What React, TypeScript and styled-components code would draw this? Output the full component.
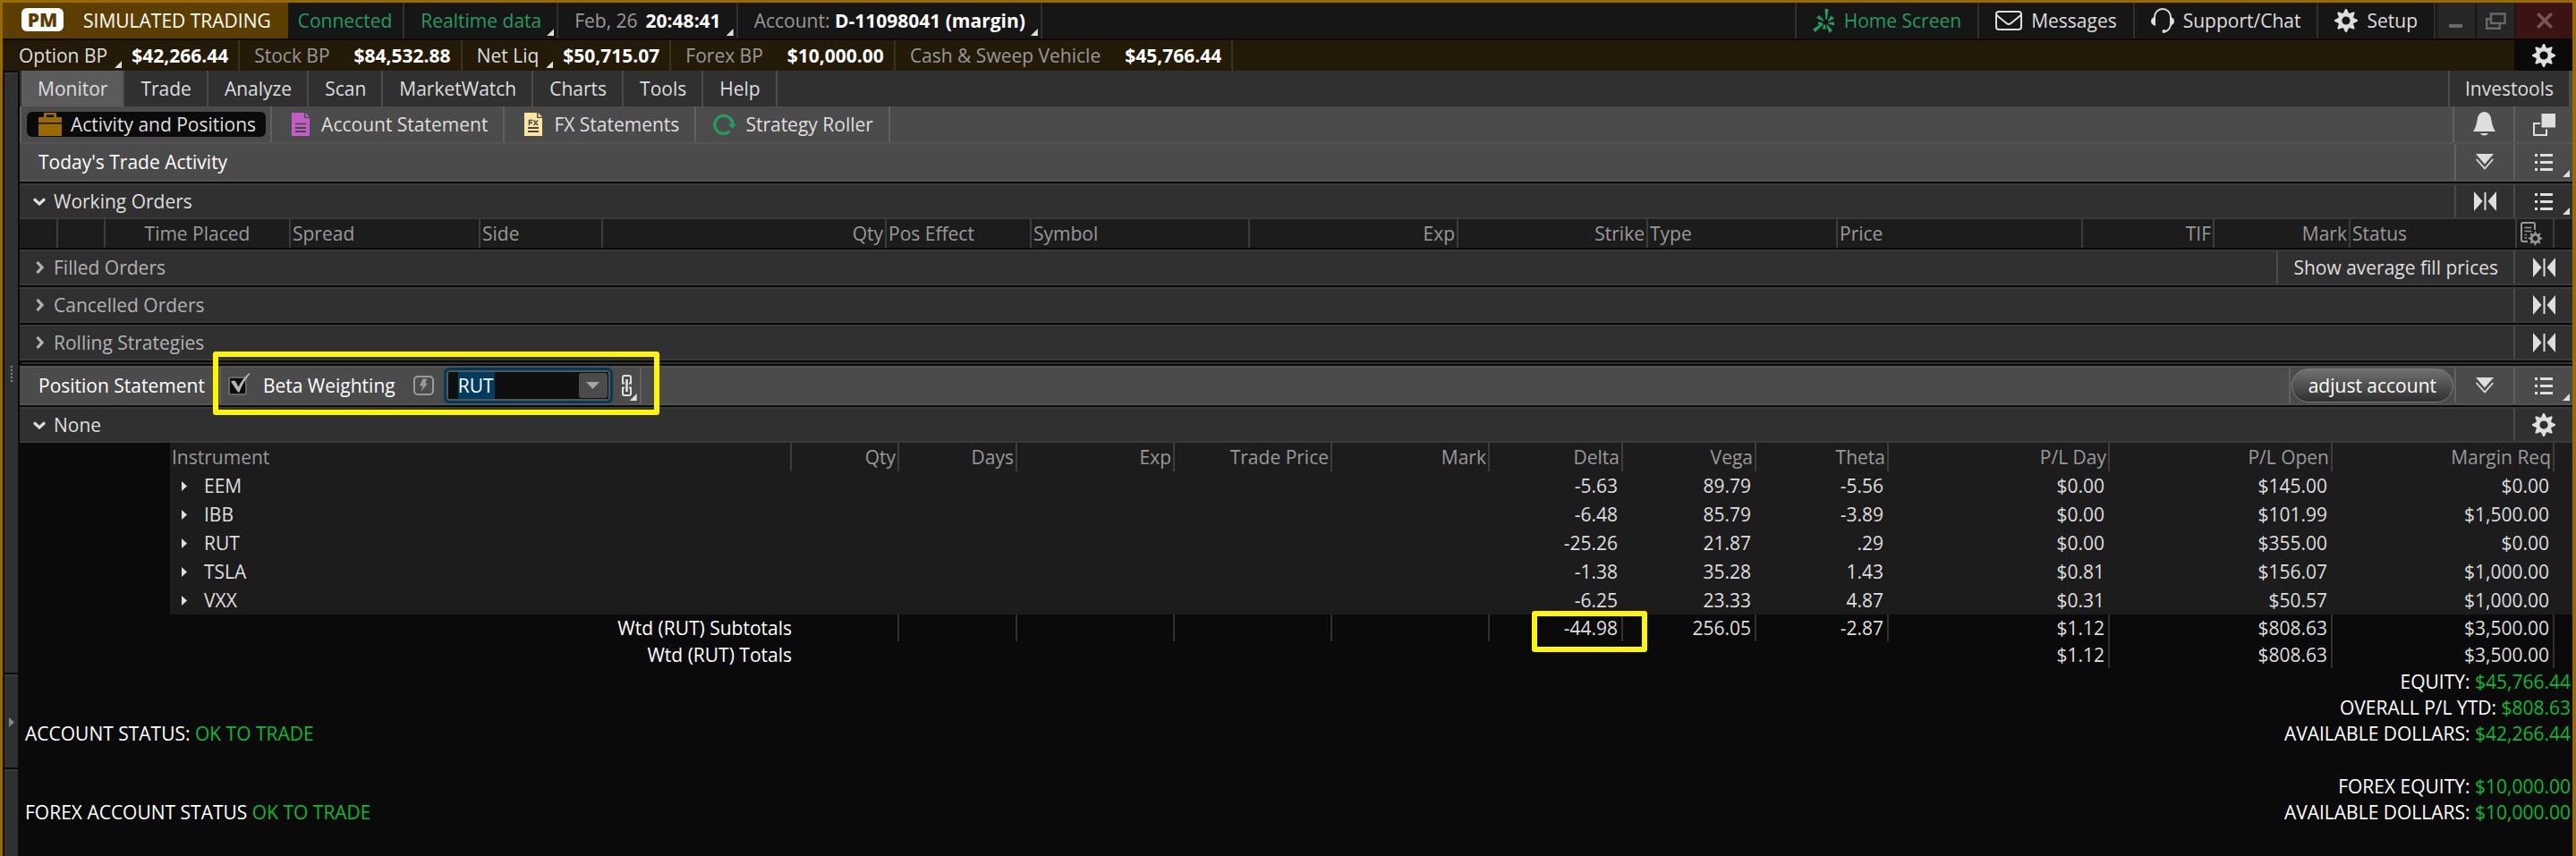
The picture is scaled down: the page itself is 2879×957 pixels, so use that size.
import React, { ReactNode } from "react";
import styled, { createGlobalStyle, css } from "styled-components";

const c = {
  gold: "#986a00",
  black: "#0a0a0a",
  bar: "#161616",
  dark: "#303030",
  darkLine: "#393939",
  darkSep: "#4b4b4b",
  mid: "#4b4b4b",
  midLine: "#535353",
  midSep: "#606060",
  table: "#1c1c1c",
  text: "#dedede",
  muted: "#999999",
  teal: "#259b5f",
  green: "#06bb30",
  highlight: "#fff600",
};

const GlobalStyle = createGlobalStyle`
  * { box-sizing: border-box; }
  body {
    margin: 0;
    background: ${c.black};
    color: ${c.text};
    font: 400 21px/28px "Open Sans", "Noto Sans", sans-serif;
  }
  button, input { font: inherit; color: inherit; }
  button { background: none; border: 0; padding: 0; cursor: pointer; }
  svg { display: block; flex: none; }
`;

const Frame = styled.div`
  display: flex;
  flex-direction: column;
  min-height: 100vh;
  border: solid ${c.gold};
  border-width: 3px 4px 0 3px;
  white-space: nowrap;
`;

/* ---------- title bar ---------- */

const TitleBar = styled.header`
  display: flex;
  height: 40px;
  background: ${c.bar};
`;

const ModeTag = styled.div`
  display: flex;
  align-items: center;
  gap: 22px;
  padding: 0 19px 0 21px;
  background: #5c3f00;
  color: #fff;
`;

const Badge = styled.span`
  width: 47px;
  height: 26px;
  margin-bottom: 3px;
  border-radius: 6px;
  background: #fff;
  color: #5c3f00;
  font-weight: 800;
  line-height: 26px;
  text-align: center;
`;

const TitleItem = styled.div<{ $tone?: string; $tight?: boolean }>`
  position: relative;
  display: flex;
  align-items: center;
  gap: 9px;
  padding: 0 17px 0 18px;
  ${(p) => p.$tight && "padding: 0 12px 0 11px;"}
  border-right: 2px solid #2f2f2f;
  color: ${(p) => p.$tone ?? c.muted};
`;

const Strong = styled.strong`
  color: #fff;
  font-weight: 700;
`;

const Corner = styled.i<{ $outside?: boolean }>`
  position: absolute;
  right: ${(p) => (p.$outside ? "-16px" : "3px")};
  bottom: 3px;
  width: 8px;
  height: 8px;
  background: ${c.text};
  clip-path: polygon(100% 0, 100% 100%, 0 100%);
`;

const Spacer = styled.div`
  flex: 1;
`;

const TitleAction = styled.button<{ $tone?: string }>`
  display: flex;
  align-items: center;
  gap: 10px;
  padding: 0 18px;
  border-left: 2px solid #2f2f2f;
  color: ${(p) => p.$tone ?? c.text};
`;

const WindowButtons = styled.div`
  display: flex;
  gap: 2px;
  padding-left: 2px;
  border-left: 2px solid #2f2f2f;
`;

const WindowButton = styled.button<{ $close?: boolean }>`
  display: grid;
  place-items: center;
  width: ${(p) => (p.$close ? 63 : 42)}px;
  background: ${(p) => (p.$close ? "#3c1313" : "#262626")};
  color: ${(p) => (p.$close ? "#7b5555" : "#696969")};
`;

/* ---------- balances ---------- */

const Balances = styled.div`
  display: flex;
  height: 34px;
  margin-top: 2px;
  padding-left: 2px;
  background: #231a08;
`;

const Balance = styled.div`
  display: flex;
  align-items: center;
  gap: 27px;
  padding: 0 11px 0 16px;
  border-right: 2px solid #3b3220;
  &:last-of-type { border-right: 0; }
`;

const BalanceLabel = styled.span<{ $menu?: boolean }>`
  position: relative;
  height: 34px;
  line-height: 34px;
  color: ${(p) => (p.$menu ? c.text : c.muted)};
`;

const BalanceGear = styled.button`
  display: grid;
  place-items: center;
  width: 65px;
  background: ${c.black};
`;

/* ---------- body ---------- */

const Body = styled.div`
  display: flex;
  flex: 1;
`;

const SideRail = styled.aside`
  display: flex;
  flex-direction: column;
  gap: 2px;
  width: 15px;
  margin: 2px 2px 0;
`;

const RailPart = styled.button<{ $size?: number }>`
  display: grid;
  place-items: center;
  flex: ${(p) => (p.$size ? `0 0 ${p.$size}px` : 1)};
  background: ${c.dark};
  border-top: 2px solid ${c.darkLine};
`;

const Main = styled.main`
  flex: 1;
  min-width: 0;
`;

const Tabs = styled.nav`
  display: flex;
  height: 40px;
  padding-left: 2px;
  background: ${c.dark};
`;

const Tab = styled.button<{ $active?: boolean }>`
  padding: 0 17px 0 18px;
  border-right: 2px solid ${c.darkSep};
  background: ${(p) => (p.$active ? "#5b5b5b" : "transparent")};
`;

const SideLink = styled.a`
  display: flex;
  align-items: center;
  padding: 0 17px;
  border: solid ${c.darkSep};
  border-width: 0 4px 0 2px;
  color: ${c.text};
  text-decoration: none;
`;

const SubTabs = styled.nav`
  display: flex;
  height: 40px;
  background: ${c.mid};
  border-left: 2px solid ${c.midSep};
`;

const SubTab = styled.button<{ $active?: boolean }>`
  display: flex;
  align-items: center;
  padding: ${(p) => (p.$active ? "0 5px 0 6px" : "0 17px 0 19px")};
  border-right: 2px solid ${c.midSep};
`;

const SubTabFace = styled.span<{ $active?: boolean }>`
  display: flex;
  align-items: center;
  gap: 10px;
  height: 28px;
  ${(p) => p.$active && css`
    padding: 0 11px 0 13px;
    border-radius: 6px;
    background: ${c.black};
  `}
`;

const IconSlot = styled.span`
  display: grid;
  place-items: center;
  width: 26px;
`;

/* ---------- section bars ---------- */

const Bar = styled.div<{ $light?: boolean; $first?: boolean }>`
  display: flex;
  height: ${(p) => (p.$light ? 44 : 40)}px;
  margin-top: ${(p) => (p.$first ? 0 : 2)}px;
  border: solid ${(p) => (p.$light ? c.midLine : c.darkLine)};
  border-width: 2px 0;
  background: ${(p) => (p.$light ? c.mid : c.dark)};
  --sep: ${(p) => (p.$light ? c.midSep : c.darkSep)};
`;

const BarTitle = styled.h2`
  display: flex;
  align-items: center;
  margin: 0;
  padding: 0 16px 0 21px;
  color: #fff;
  font: inherit;
`;

const Toggle = styled.button<{ $open?: boolean }>`
  display: flex;
  align-items: center;
  gap: 8px;
  padding-left: 14px;
  color: ${(p) => (p.$open ? c.text : "#b2b2b2")};
`;

const ChevronSlot = styled.span`
  display: grid;
  place-items: center;
  width: 16px;
`;

const BarButton = styled.button<{ $wide?: boolean }>`
  position: relative;
  display: grid;
  place-items: center;
  width: ${(p) => (p.$wide ? 68 : 66)}px;
  border-left: 2px solid var(--sep, ${c.midSep});
`;

const BarTextButton = styled.button`
  padding: 0 17px;
  border-left: 2px solid var(--sep);
`;

const Divider = styled.hr`
  height: 2px;
  margin: 2px 0 0 2px;
  border: 0;
  background: ${c.dark};
`;

/* ---------- beta weighting ---------- */

const BetaGroup = styled.div`
  position: relative;
  display: flex;
  align-items: center;
  padding: 0 0 0 8px;
  border: solid var(--sep);
  border-width: 0 2px;
  color: #fff;
`;

const Highlight = styled.span<{ $inset: string }>`
  position: absolute;
  inset: ${(p) => p.$inset};
  z-index: 1;
  border: 6px solid ${c.highlight};
  border-radius: 3px;
  pointer-events: none;
`;

const CheckLabel = styled.label`
  position: relative;
  display: flex;
  align-items: center;
  gap: 18px;
  svg { position: absolute; left: 3px; top: 0; pointer-events: none; display: none; }
  input:checked + svg { display: block; }
`;

const CheckBox = styled.input`
  appearance: none;
  width: 21px;
  height: 21px;
  margin: 0;
  border: 2px solid #666;
  border-radius: 3px;
  background: ${c.black};
`;

const Flash = styled.button`
  margin: 0 11px 0 20px;
`;

const Combo = styled.div`
  display: flex;
  align-items: center;
  width: 189px;
  height: 40px;
  padding: 0 3px 0 13px;
  border: 3px solid #003a5c;
  border-radius: 6px;
  background: #0f0f0f;
  box-shadow: inset 0 0 0 2px #555;
`;

const ComboInput = styled.input`
  flex: 1;
  min-width: 0;
  height: 30px;
  padding: 0;
  border: 0;
  outline: 0;
  color: #fff;
  background: linear-gradient(#003b60, #003b60) 0 0 / 41px 100% no-repeat;
`;

const ComboArrow = styled.button`
  display: grid;
  place-items: center;
  width: 32px;
  height: 28px;
  border-radius: 3px;
  background: #4b4b4b;
`;

const LinkButton = styled.button`
  position: relative;
  display: flex;
  align-items: center;
  align-self: stretch;
  width: 20px;
  margin-left: 10px;
`;

const PillCell = styled.div`
  display: flex;
  align-items: center;
  padding: 0 1px;
  border-left: 2px solid var(--sep);
`;

const Pill = styled.button`
  height: 38px;
  padding: 0 18px;
  border: 1px solid #7b7b7b;
  border-radius: 19px;
  background: linear-gradient(#707070, #303030);
  color: #fff;
`;

/* ---------- tables ---------- */

const Grid = styled.table`
  width: 100%;
  table-layout: fixed;
  border-collapse: separate;
  border-spacing: 0;
  th, td { padding: 0; overflow: visible; }
`;

type Align = "left" | "right" | "center";

const Head = styled.th<{ $align?: Align; $line?: boolean }>`
  height: 32px;
  && { padding: 0 2px; }
  border-right: 2px solid ${(p) => (p.$line === false ? c.table : "#3c3c3c")};
  background: ${c.table};
  color: ${c.muted};
  font-weight: 400;
  text-align: ${(p) => p.$align ?? "right"};
  svg { margin-left: 2px; }
`;

const Cell = styled.td<{ $total?: boolean; $line?: boolean }>`
  position: relative;
  height: ${(p) => (p.$total ? 30 : 32)}px;
  && { padding-right: 4px; }
  border-right: 2px solid ${(p) => (p.$line ? "#303030" : "transparent")};
  background: ${(p) => (p.$total ? c.black : c.table)};
  text-align: right;
`;

const Gutter = styled.td`
  background: ${c.black};
`;

const SymbolCell = styled.td`
  background: ${c.table};
`;

const SymbolButton = styled.button`
  display: flex;
  align-items: center;
  gap: 19px;
  padding-left: 13px;
`;

const TotalLabel = styled.th`
  height: 30px;
  color: #fff;
  font-weight: 400;
  text-align: right;
`;

/* ---------- footer ---------- */

const Summary = styled.footer`
  display: grid;
  grid-template-columns: 1fr auto;
  grid-template-rows: repeat(3, 29px) 30px repeat(2, 29px);
  padding: 1px 2px 0 6px;
  color: #fff;
  line-height: 29px;
`;

const SummaryLine = styled.div<{ $row: number; $end?: boolean }>`
  grid-row: ${(p) => p.$row};
  grid-column: ${(p) => (p.$end ? 2 : 1)};
  text-align: ${(p) => (p.$end ? "right" : "left")};
`;

const Good = styled.span`
  color: ${c.green};
`;

/* ---------- icons ---------- */

const Gear = ({ size = 26, color = c.text }: { size?: number; color?: string }) => (
  <svg width={size} height={size} viewBox="-13 -13 26 26">
    <circle r="6.8" fill="none" stroke={color} strokeWidth="4.4" />
    {[0, 45, 90, 135, 180, 225, 270, 315].map((a) => (
      <path key={a} d="M-3.4-7.6L-.8-13H.8L3.4-7.6Z" fill={color} transform={`rotate(${a})`} />
    ))}
  </svg>
);

const Burst = () => (
  <svg width="25" height="27" viewBox="0 0 25 27" fill={c.teal}>
    <path d="M13.5 0h4l-1.7 12h-1.4ZM20.5 7.5l3.5 3-6.3 3.8-.8-1ZM24 14.5v4l-6.500-1.700v-1.200ZM22 24l-3.600 3-3.400-9 1.200-.6ZM10.800 22.500h4l-1-5h-1.600ZM0 22.500l2.600 3.500 9-8.600-1-1.400ZM6 14.200v3.800l5-1.600v-.8ZM4 10l3-3 5.500 5.800-.9.900Z" />
  </svg>
);

const Envelope = () => (
  <svg width="30" height="22" viewBox="0 0 30 22" fill="none" stroke={c.text} strokeWidth="2">
    <rect x="1" y="1" width="28" height="20" rx="3" />
    <path d="M1.500 5L12.500 14Q15 16 17.500 14L28.500 5" />
  </svg>
);

const Headset = () => (
  <svg width="26" height="28" viewBox="0 0 26 28" fill="none" stroke={c.text} strokeWidth="2">
    <path d="M4 18V10A9 9 0 0 1 22 10V18Q21.500 25 15 26.500" />
    <path d="M5 9.500V20Q0 18.500 0 14.800T5 9.500ZM21 9.500V20Q26 18.500 26 14.800T21 9.500Z" fill={c.text} stroke="none" />
    <circle cx="14.500" cy="26" r="2" fill={c.text} stroke="none" />
  </svg>
);

const Minimise = () => (
  <svg width="16" height="18" viewBox="0 0 16 18"><path d="M0 13h15v4H0z" fill="currentColor" /></svg>
);

const Restore = () => (
  <svg width="23" height="19" viewBox="0 0 23 19" fill="none" stroke="currentColor" strokeWidth="2.400">
    <rect x="6" y="1.500" width="15.500" height="10.500" />
    <path d="M5 7.200H1.200V17.800H15.800V13" />
  </svg>
);

const Close = () => (
  <svg width="18" height="18" viewBox="0 0 18 18" fill="none" stroke="currentColor" strokeWidth="3.600">
    <path d="M1.200 1.200L16.800 16.800M16.800 1.200L1.200 16.800" />
  </svg>
);

const Briefcase = () => (
  <svg width="26" height="26" viewBox="0 0 26 26" fill={c.gold}>
    <path d="M6 5V0h14v5h-3V2.500H9V5ZM0 5h26v6H0ZM0 12.500h26V26H0Z" />
  </svg>
);

const Doc = ({ color, fx }: { color: string; fx?: boolean }) => (
  <svg width="20" height="26" viewBox="0 0 20 26">
    <path d="M0 0H14V6H20V26H0Z" fill={color} />
    <path d="M15.500 0L20 4.700H15.500Z" fill={color} />
    <g stroke="#474747" strokeWidth="1.500" fill="none">
      {!fx && <path d="M4 12.500H16" />}
      <path d="M4 17H16M4 21H16" strokeWidth="2" />
      {fx && <path d="M5.500 14V8.500H9.500M5.500 11.200H9M10.500 8.500L15 14M15 8.500L10.500 14" />}
    </g>
  </svg>
);

const Roller = () => (
  <svg width="26" height="24" viewBox="0 0 26 24">
    <path d="M18.500 19.800A10 10 0 1 1 21.800 13" fill="none" stroke={c.teal} strokeWidth="3.400" />
    <path d="M17 11.500H26L21.500 17Z" fill={c.teal} />
  </svg>
);

const Bell = () => (
  <svg width="25" height="32" viewBox="0 0 25 32" fill={c.text}>
    <path d="M0 24Q3 20 4.500 12Q5.500 2 12.500 2T20.500 12Q22 20 25 24ZM8 26h9q-1.500 2.500-4.500 2.500T8 26Z" />
  </svg>
);

const PopOut = () => (
  <svg width="25" height="25" viewBox="0 0 25 25">
    <path d="M8 11H1V24H15V17.500" fill="none" stroke={c.text} strokeWidth="2" />
    <rect x="9.500" width="15.500" height="15.500" fill={c.text} />
  </svg>
);

const DoubleDown = () => (
  <svg width="20" height="18" viewBox="0 0 20 18">
    <path d="M0 0H20L10 11.500Z" fill={c.text} />
    <path d="M.7 6L10 16.500L19.300 6" fill="none" stroke={c.text} strokeWidth="1.800" />
  </svg>
);

const List = () => (
  <svg width="20" height="19" viewBox="0 0 20 19" fill={c.text}>
    <path d="M0 0h3v3H0zM6 0h14v3H6zM0 8h3v3H0zM6 8h14v3H6zM0 16h3v3H0zM6 16h14v3H6z" />
  </svg>
);

const Collapse = () => (
  <svg width="25" height="22" viewBox="0 0 25 22" fill={c.text}>
    <path d="M0 0L9.500 11L0 22ZM11.500 1h2v20h-2zM25 0L15.500 11L25 22Z" />
  </svg>
);

const DocGear = () => (
  <svg width="25" height="27" viewBox="0 0 25 27" fill="none" stroke={c.muted} strokeWidth="2">
    <path d="M8 22H3Q1 22 1 20V3Q1 1 3 1H14Q16 1 16 3V9" />
    <path d="M4.500 6.500H12.500M4.500 10.500H12.500M4.500 14.500H7M4.500 18H7" strokeWidth="1.600" />
    <g transform="translate(16.500 18.500)">
      <circle r="4.200" strokeWidth="2.600" />
      {[0, 45, 90, 135, 180, 225, 270, 315].map((a) => (
        <path key={a} d="M-1.800-5L0-8.500L1.800-5Z" fill={c.muted} stroke="none" transform={`rotate(${a})`} />
      ))}
    </g>
  </svg>
);

const ChevronDown = () => (
  <svg width="14" height="9" viewBox="0 0 14 9" fill="none" stroke="currentColor" strokeWidth="3.200">
    <path d="M1 1.500L7 7L13 1.500" />
  </svg>
);

const ChevronRight = () => (
  <svg width="9" height="14" viewBox="0 0 9 14" fill="none" stroke="currentColor" strokeWidth="3.200">
    <path d="M1.500 1L7 7L1.500 13" />
  </svg>
);

const Arrow = ({ color = c.text }: { color?: string }) => (
  <svg width="6" height="11" viewBox="0 0 6 11"><path d="M0 0L6 5.500L0 11Z" fill={color} /></svg>
);

const Grip = () => (
  <svg width="2" height="18" viewBox="0 0 2 18" fill="#858585">
    <path d="M0 0h2v2H0zM0 4h2v2H0zM0 8h2v2H0zM0 12h2v2H0zM0 16h2v2H0z" />
  </svg>
);

const Tick = () => (
  <svg width="22" height="24" viewBox="0 0 22 24">
    <path d="M0 9.500Q3 8 5 9L8.500 15.500Q13 6 20.500 0L21.500 1Q14 9 9.500 21.500H8Z" fill="#b4b4b4" />
  </svg>
);

const Bolt = () => (
  <svg width="23" height="22" viewBox="0 0 23 22">
    <rect x="1" y="1" width="21" height="20" rx="4" fill="none" stroke="#9a9a9a" strokeWidth="2" />
    <path d="M10.500 3.500H15.500L13 8.500H16L8.500 18L10.500 11.500H7Z" fill="#9a9a9a" />
  </svg>
);

const Chain = () => (
  <svg width="11" height="24" viewBox="0 0 11 24" fill="none" stroke={c.text} strokeWidth="2">
    <path d="M3 9.500H1V3Q1 1 3 1H8Q10 1 10 3V9.500H8M3 14.500H1V21Q1 23 3 23H8Q10 23 10 21V14.500H8" />
    <path d="M5.500 5V19" strokeWidth="2.600" />
  </svg>
);

const Caret = () => (
  <svg width="15" height="8" viewBox="0 0 15 8"><path d="M0 0H15L7.500 8Z" fill="#a5a5a5" /></svg>
);

/* ---------- data ---------- */

const balances = [
  { label: "Option BP", value: "$42,266.44", menu: true },
  { label: "Stock BP", value: "$84,532.88" },
  { label: "Net Liq", value: "$50,715.07", menu: true },
  { label: "Forex BP", value: "$10,000.00" },
  { label: "Cash & Sweep Vehicle", value: "$45,766.44" },
];

const tabs = ["Monitor", "Trade", "Analyze", "Scan", "MarketWatch", "Charts", "Tools", "Help"];

const orderColumns: { w: number; label?: string; align?: Align }[] = [
  { w: 43 }, { w: 53 },
  { w: 207, label: "Time Placed", align: "center" },
  { w: 212, label: "Spread", align: "left" },
  { w: 137, label: "Side", align: "left" },
  { w: 317, label: "Qty" },
  { w: 162, label: "Pos Effect", align: "left" },
  { w: 244, label: "Symbol", align: "left" },
  { w: 233, label: "Exp" },
  { w: 212, label: "Strike" },
  { w: 212, label: "Type", align: "left" },
  { w: 274, label: "Price", align: "left" },
  { w: 147, label: "TIF" },
  { w: 152, label: "Mark" },
  { w: 186, label: "Status", align: "left" },
];

const positionColumns = ["Qty", "Days", "Exp", "Trade Price", "Mark", "Delta", "Vega", "Theta", "P/L Day", "P/L Open", "Margin Req"];
const positionWidths = [168, 695, 120, 132, 176, 176, 176, 149, 149, 148, 247, 249, 248, 20];

const positions = [
  ["EEM", "-5.63", "89.79", "-5.56", "$0.00", "$145.00", "$0.00"],
  ["IBB", "-6.48", "85.79", "-3.89", "$0.00", "$101.99", "$1,500.00"],
  ["RUT", "-25.26", "21.87", ".29", "$0.00", "$355.00", "$0.00"],
  ["TSLA", "-1.38", "35.28", "1.43", "$0.81", "$156.07", "$1,000.00"],
  ["VXX", "-6.25", "23.33", "4.87", "$0.31", "$50.57", "$1,000.00"],
];

/* ---------- composed parts ---------- */

const Section = ({ title, open, children }: { title: string; open?: boolean; children: ReactNode }) => (
  <Bar>
    <Toggle $open={open} aria-expanded={!!open}>
      <ChevronSlot>{open ? <ChevronDown /> : <ChevronRight />}</ChevronSlot>
      {title}
    </Toggle>
    <Spacer />
    {children}
  </Bar>
);

const ListButton = () => (
  <BarButton aria-label="Menu"><List /><Corner /></BarButton>
);

const CollapseButton = () => (
  <BarButton aria-label="Collapse"><Collapse /></BarButton>
);

const SubTabItem = ({ icon, label, active }: { icon: ReactNode; label: string; active?: boolean }) => (
  <SubTab $active={active}>
    <SubTabFace $active={active}><IconSlot>{icon}</IconSlot>{label}</SubTabFace>
  </SubTab>
);

const OrdersTable = () => (
  <Grid>
    <colgroup>
      {orderColumns.map((col, i) => <col key={i} width={col.w} />)}
      <col width={42} />
      <col width={20} />
    </colgroup>
    <thead>
      <tr>
        {orderColumns.map((col, i) => <Head key={i} $align={col.align}>{col.label}</Head>)}
        <Head $align="left"><DocGear /></Head>
        <Head $line={false} />
      </tr>
    </thead>
  </Grid>
);

const PositionsTable = () => (
  <Grid>
    <colgroup>{positionWidths.map((w, i) => <col key={i} width={w} />)}</colgroup>
    <thead>
      <tr>
        <Gutter />
        <Head $align="left">Instrument</Head>
        {positionColumns.map((name) => <Head key={name}>{name}</Head>)}
        <Head $line={false} />
      </tr>
    </thead>
    <tbody>
      {positions.map(([symbol, ...values]) => (
        <tr key={symbol}>
          <Gutter />
          <SymbolCell><SymbolButton><Arrow />{symbol}</SymbolButton></SymbolCell>
          <Cell colSpan={5} />
          {values.map((v, i) => <Cell key={i}>{v}</Cell>)}
          <Cell />
        </tr>
      ))}
    </tbody>
    <tfoot>
      <tr>
        <TotalLabel colSpan={2} scope="row">Wtd (RUT) Subtotals</TotalLabel>
        {[0, 1, 2, 3, 4].map((i) => <Cell key={i} $total $line />)}
        <Cell $total $line>-44.98<Highlight $inset="-4px -29px -12px 47px" /></Cell>
        {["256.05", "-2.87", "$1.12", "$808.63", "$3,500.00"].map((v) => <Cell key={v} $total $line>{v}</Cell>)}
        <Cell $total />
      </tr>
      <tr>
        <TotalLabel colSpan={2} scope="row">Wtd (RUT) Totals</TotalLabel>
        <Cell colSpan={8} $total />
        {["$1.12", "$808.63", "$3,500.00"].map((v) => <Cell key={v} $total $line>{v}</Cell>)}
        <Cell $total />
      </tr>
    </tfoot>
  </Grid>
);

export default function App() {
  return (
    <Frame>
      <GlobalStyle />
      <TitleBar>
        <ModeTag><Badge>PM</Badge>SIMULATED TRADING</ModeTag>
        <TitleItem $tone={c.teal} $tight>Connected</TitleItem>
        <TitleItem $tone={c.teal}>Realtime data<Corner /></TitleItem>
        <TitleItem>Feb, 26<Strong>20:48:41</Strong><Corner /></TitleItem>
        <TitleItem><span>Account: <Strong>D-11098041 (margin)</Strong></span><Corner /></TitleItem>
        <Spacer />
        <TitleAction $tone={c.teal}><Burst />Home Screen</TitleAction>
        <TitleAction><Envelope />Messages</TitleAction>
        <TitleAction><Headset />Support/Chat</TitleAction>
        <TitleAction><Gear />Setup</TitleAction>
        <WindowButtons>
          <WindowButton aria-label="Minimise"><Minimise /></WindowButton>
          <WindowButton aria-label="Restore"><Restore /></WindowButton>
          <WindowButton $close aria-label="Close"><Close /></WindowButton>
        </WindowButtons>
      </TitleBar>

      <Balances>
        {balances.map((b) => (
          <Balance key={b.label}>
            <BalanceLabel $menu={b.menu}>{b.label}{b.menu && <Corner $outside />}</BalanceLabel>
            <Strong>{b.value}</Strong>
          </Balance>
        ))}
        <Spacer />
        <BalanceGear aria-label="Balance settings"><Gear /></BalanceGear>
      </Balances>

      <Body>
        <SideRail>
          <RailPart aria-label="Resize"><Grip /></RailPart>
          <RailPart $size={104} aria-label="Expand sidebar"><Arrow color="#858585" /></RailPart>
          <RailPart $size={97} aria-label="Sidebar" />
        </SideRail>

        <Main>
          <Tabs>
            {tabs.map((t, i) => <Tab key={t} $active={i === 0}>{t}</Tab>)}
            <Spacer />
            <SideLink href="#investools">Investools</SideLink>
          </Tabs>

          <SubTabs>
            <SubTabItem active icon={<Briefcase />} label="Activity and Positions" />
            <SubTabItem icon={<Doc color="#c25cc4" />} label="Account Statement" />
            <SubTabItem icon={<Doc color="#fae6a0" fx />} label="FX Statements" />
            <SubTabItem icon={<Roller />} label="Strategy Roller" />
            <Spacer />
            <BarButton $wide aria-label="Alerts"><Bell /></BarButton>
            <BarButton aria-label="Detach"><PopOut /></BarButton>
          </SubTabs>

          <Bar $light $first>
            <BarTitle>Today's Trade Activity</BarTitle>
            <Spacer />
            <BarButton aria-label="Collapse all"><DoubleDown /></BarButton>
            <ListButton />
          </Bar>

          <Section title="Working Orders" open><CollapseButton /><ListButton /></Section>
          <OrdersTable />
          <Section title="Filled Orders">
            <BarTextButton>Show average fill prices</BarTextButton>
            <CollapseButton />
          </Section>
          <Section title="Cancelled Orders"><CollapseButton /></Section>
          <Section title="Rolling Strategies"><CollapseButton /></Section>
          <Divider />

          <Bar $light>
            <BarTitle>Position Statement</BarTitle>
            <BetaGroup>
              <CheckLabel>
                <CheckBox type="checkbox" defaultChecked />
                <Tick />
                Beta Weighting
              </CheckLabel>
              <Flash aria-label="Quick select"><Bolt /></Flash>
              <Combo>
                <ComboInput aria-label="Beta weighting symbol" defaultValue="RUT" />
                <ComboArrow aria-label="Choose symbol"><Caret /></ComboArrow>
              </Combo>
              <LinkButton aria-label="Link symbol"><Chain /><Corner /></LinkButton>
              <Highlight $inset="-18px -22px -13px -9px" />
            </BetaGroup>
            <Spacer />
            <PillCell><Pill>adjust account</Pill></PillCell>
            <BarButton aria-label="Collapse all"><DoubleDown /></BarButton>
            <ListButton />
          </Bar>

          <Section title="None" open>
            <BarButton aria-label="Settings"><Gear /></BarButton>
          </Section>
          <PositionsTable />

          <Summary>
            <SummaryLine $row={1} $end>EQUITY: <Good>$45,766.44</Good></SummaryLine>
            <SummaryLine $row={2} $end>OVERALL P/L YTD: <Good>$808.63</Good></SummaryLine>
            <SummaryLine $row={3}>ACCOUNT STATUS: <Good>OK TO TRADE</Good></SummaryLine>
            <SummaryLine $row={3} $end>AVAILABLE DOLLARS: <Good>$42,266.44</Good></SummaryLine>
            <SummaryLine $row={5} $end>FOREX EQUITY: <Good>$10,000.00</Good></SummaryLine>
            <SummaryLine $row={6}>FOREX ACCOUNT STATUS <Good>OK TO TRADE</Good></SummaryLine>
            <SummaryLine $row={6} $end>AVAILABLE DOLLARS: <Good>$10,000.00</Good></SummaryLine>
          </Summary>
        </Main>
      </Body>
    </Frame>
  );
}
